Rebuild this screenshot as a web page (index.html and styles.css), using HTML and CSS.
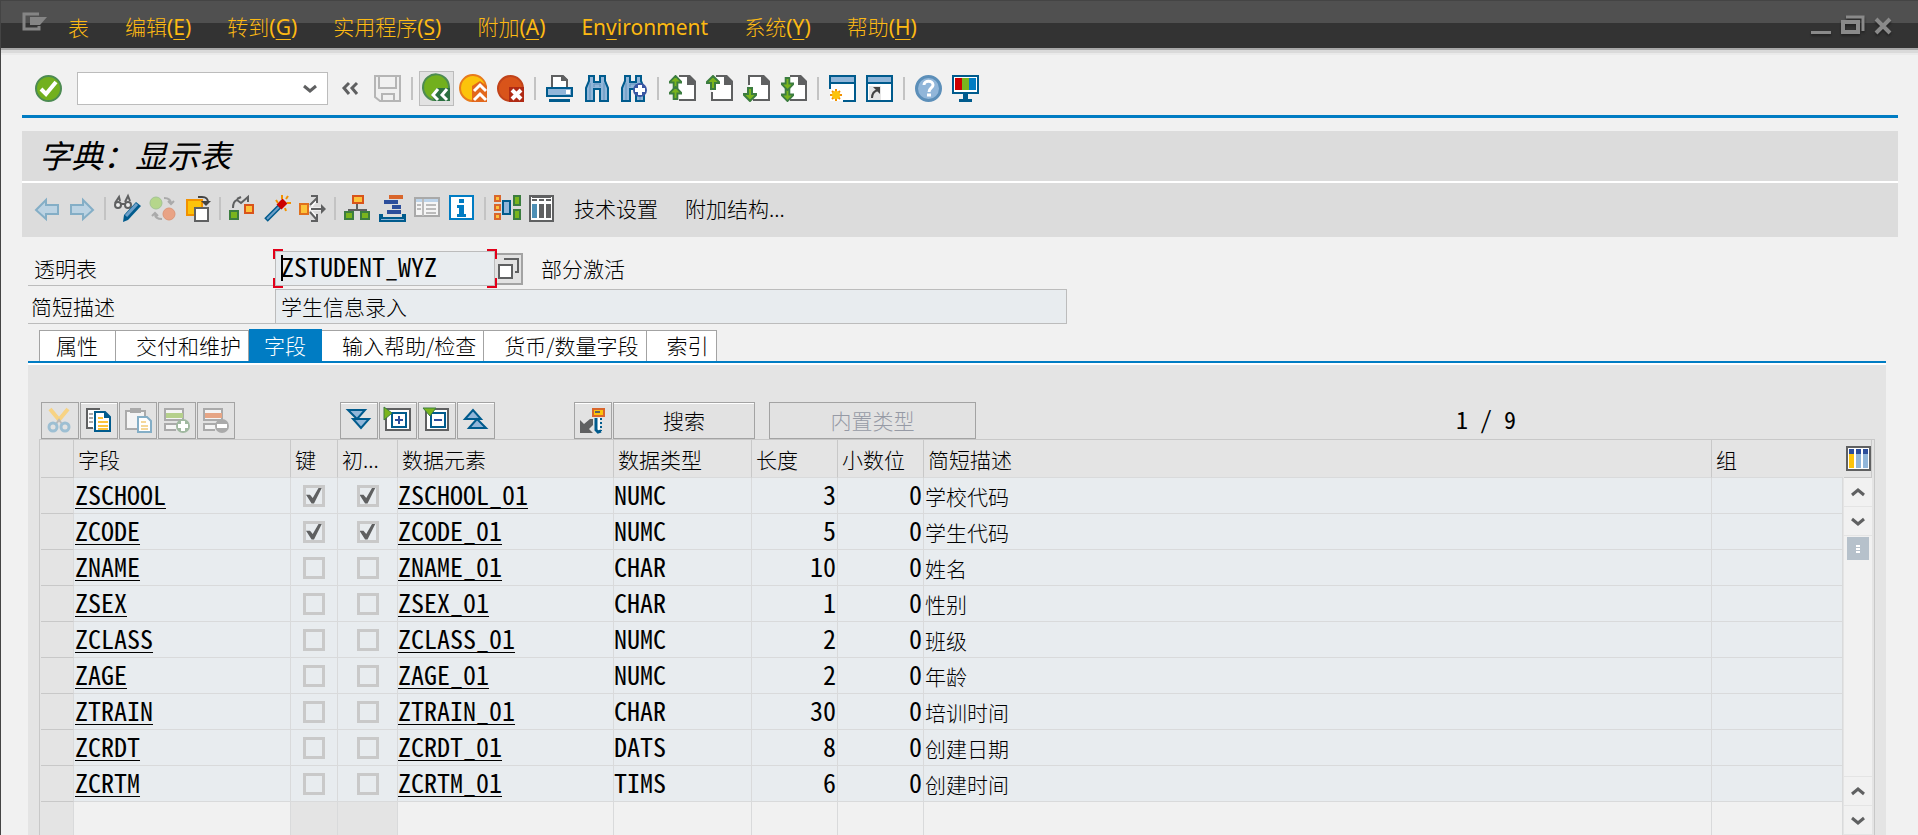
FILE: index.html
```html
<!DOCTYPE html>
<html lang="zh-CN">
<head>
<meta charset="utf-8">
<title>字典：显示表</title>
<link rel="stylesheet" href="styles.css">
</head>
<body>
<svg class="defs" aria-hidden="true">
  <symbol id="page" viewBox="0 0 27 27"><path d="M10 1h9l7 7v17H10z" fill="#fff"/><path d="M10 1h9M10 25h16V8" fill="none" stroke="#5f6061" stroke-width="2"/><path d="M18 0h3l6 6v4h-9z" fill="#5f6061"/></symbol>
  <symbol id="up" viewBox="0 0 14 15"><path d="M7 1l6 6v1H9v6H5V8H1V7z" fill="#7ab51d" stroke="#3c7d3f" stroke-width="2"/></symbol>
  <symbol id="binoc" viewBox="0 0 24 27"><path d="M4 1h5v6h6V1h5v5l3 7v13h-8V14H9v12H1V13l3-7z" fill="#91b6d9" stroke="#005b8d" stroke-width="2"/><path d="M9 12V9h6v3M5 8v17M19 8v17" fill="none" stroke="#6392bd"/></symbol>
  <symbol id="chev-up" viewBox="0 0 14 9"><path d="M1 7l6-5 6 5" fill="none" stroke="#5f6061" stroke-width="3"/></symbol>
  <symbol id="chev-down" viewBox="0 0 14 9"><path d="M1 2l6 5 6-5" fill="none" stroke="#5f6061" stroke-width="3"/></symbol>
</svg>
<div class="window">
  <header class="menubar">
    <button class="sysmenu" aria-label="系统菜单"><svg width="26" height="19" viewBox="0 0 26 19"><path d="M17 2H2v15h15v-3" fill="none" stroke="#858585" stroke-width="3"/><path d="M8 5h17l-7 8H8z" fill="#858585"/></svg></button>
    <nav class="menus">
      <button>表</button>
      <button>编辑<span>(<u>E</u>)</span></button>
      <button>转到<span>(<u>G</u>)</span></button>
      <button>实用程序<span>(<u>S</u>)</span></button>
      <button>附加<span>(<u>A</u>)</span></button>
      <button><span>En<u>v</u>ironment</span></button>
      <button>系统<span>(<u>Y</u>)</span></button>
      <button>帮助<span>(<u>H</u>)</span></button>
    </nav>
    <div class="winctl">
      <button aria-label="最小化"><svg width="20" height="20" viewBox="0 0 20 20"><path d="M0 16h20v3H0z" fill="#8a8a8a"/></svg></button>
      <button aria-label="还原"><svg width="24" height="20" viewBox="0 0 24 20"><path d="M5 2h17v14" fill="none" stroke="#8a8a8a" stroke-width="3"/><path d="M2 7h15v10H2z" fill="none" stroke="#8a8a8a" stroke-width="4"/></svg></button>
      <button aria-label="关闭"><svg width="16" height="20" viewBox="0 0 16 20"><path d="M1 4l14 14M15 4L1 18" stroke="#8a8a8a" stroke-width="4"/></svg></button>
    </div>
  </header>

  <div class="stdbar">
    <button class="ib" aria-label="回车"><svg width="27" height="27" viewBox="0 0 27 27"><circle cx="13.500" cy="13.500" r="12.500" fill="#72b01e" stroke="#4d8b52" stroke-width="2"/><path d="M6 14l5 5L21 7" fill="none" stroke="#fff" stroke-width="4"/></svg></button>
    <div class="command"><input type="text" aria-label="命令"><button aria-label="命令历史"><svg width="14" height="9"><use href="#chev-down"/></svg></button></div>
    <button class="collapse" aria-label="隐藏命令字段"><svg width="16" height="13" viewBox="0 0 16 13"><path d="M7 1L2 6l5 6M15 1l-5 5 5 6" fill="none" stroke="#5f6061" stroke-width="3"/></svg></button>
    <button class="ib" aria-label="保存" disabled><svg width="27" height="27" viewBox="0 0 27 27"><path d="M1 1h25v25H6l-5-4zM5 1v12h17V1M8 26v-7h12v7" fill="#f0f0f0" stroke="#b5b5b5" stroke-width="2"/></svg></button>
    <span class="sep"></span>
    <button class="ib back" aria-label="返回"><svg width="27" height="27" viewBox="0 0 27 27"><path d="M26 12A13 13 0 1 0 10 25h16z" fill="#72b01e" stroke="#4d8b52" stroke-width="2"/><path d="M8 20l6-7h13v13H12z" fill="#2c7040"/><path d="M15 14l-5 6 5 5M24 14l-5 6 5 5" fill="none" stroke="#fff" stroke-width="3"/></svg></button>
    <button class="ib" aria-label="退出"><svg width="27" height="27" viewBox="0 0 27 27"><path d="M26 12A13 13 0 1 0 12 26h14z" fill="#fcc30b" stroke="#e87b1c" stroke-width="2"/><path d="M12 11l8-5 7 5v16H12z" fill="#e2681c"/><path d="M14 16l6-6 6 6M14 25l6-6 6 6" fill="none" stroke="#fff" stroke-width="3"/></svg></button>
    <button class="ib" aria-label="取消"><svg width="27" height="27" viewBox="0 0 27 27"><path d="M26 13A12.500 12.500 0 1 0 13 26h13z" fill="#d9541a" stroke="#c1431a" stroke-width="2"/><path d="M12 12h15v15H12z" fill="#b02a14"/><path d="M15 15l9 9M24 15l-9 9" stroke="#fff" stroke-width="4"/></svg></button>
    <span class="sep"></span>
    <button class="ib" aria-label="打印"><svg width="27" height="27" viewBox="0 0 27 27"><path d="M6 12V1h11l4 4v7" fill="#fff" stroke="#5f6061" stroke-width="2"/><path d="M15 1h3l4 4v5h-2V6h-5z" fill="#5f6061"/><path d="M1 13h25v8H1z" fill="#91b6d9" stroke="#005b8d" stroke-width="2"/><path d="M20 15h4v4h-4z" fill="#fff"/><path d="M3 24h21v3H3z" fill="#005b8d"/></svg></button>
    <button class="ib" aria-label="查找"><svg width="27" height="27" viewBox="0 0 27 27"><use href="#binoc" x="2" width="24" height="27"/></svg></button>
    <button class="ib" aria-label="查找下一个"><svg width="27" height="27" viewBox="0 0 27 27"><use href="#binoc" x="1" width="24" height="27"/><circle cx="20" cy="15" r="7" fill="#3a56a3"/><path d="M20 10v10M15 15h10" stroke="#fff" stroke-width="4"/></svg></button>
    <span class="sep"></span>
    <button class="ib" aria-label="首页"><svg width="27" height="27" viewBox="0 0 27 27"><use href="#page" width="27" height="27"/><use href="#up" width="13" height="14"/><use href="#up" y="11" width="13" height="14"/></svg></button>
    <button class="ib" aria-label="上一页"><svg width="27" height="27" viewBox="0 0 27 27"><path d="M6 14h8v12H6z" fill="#fff"/><use href="#page" width="27" height="27"/><path d="M12 25H6v-8" fill="none" stroke="#5f6061" stroke-width="2"/><use href="#up" width="14" height="15"/></svg></button>
    <button class="ib" aria-label="下一页"><svg width="27" height="27" viewBox="0 0 27 27"><path d="M6 1h8v12H6z" fill="#fff"/><use href="#page" width="27" height="27"/><path d="M12 1H6v9" fill="none" stroke="#5f6061" stroke-width="2"/><g transform="rotate(180 7 19.500)"><use href="#up" y="12" width="14" height="15"/></g></svg></button>
    <button class="ib" aria-label="末页"><svg width="27" height="27" viewBox="0 0 27 27"><use href="#page" width="27" height="27"/><g transform="rotate(180 7 14.500)"><use href="#up" y="2" width="13" height="14"/><use href="#up" y="13" width="13" height="14"/></g></svg></button>
    <span class="sep"></span>
    <button class="ib" aria-label="新建会话"><svg width="27" height="27" viewBox="0 0 27 27"><path d="M1 1h25v25H1z" fill="#fff"/><path d="M1 14V1h25v25H14M1 8h25" fill="none" stroke="#005b8d" stroke-width="2"/><path d="M2 2h23v5H2z" fill="#91b6d9"/><path d="M7 14v12M1 20h12M3 16l8 8M11 16l-8 8" stroke="#f29100" stroke-width="2"/><circle cx="7" cy="20" r="4" fill="#fcc30b"/></svg></button>
    <button class="ib" aria-label="创建快捷方式"><svg width="27" height="27" viewBox="0 0 27 27"><path d="M1 1h25v25H1z" fill="#fff" stroke="#005b8d" stroke-width="2"/><path d="M2 2h23v5H2z" fill="#91b6d9"/><path d="M1 8h25" stroke="#005b8d" stroke-width="2"/><path d="M3 11h12v14H3z" fill="#e6e6e6"/><path d="M6 23c0-4 2-7 6-8" fill="none" stroke="#444" stroke-width="2"/><path d="M7 12h7v7z" fill="#444"/></svg></button>
    <span class="sep"></span>
    <button class="ib" aria-label="帮助"><svg width="27" height="27" viewBox="0 0 27 27"><circle cx="13.500" cy="13.500" r="12" fill="#91b6d9" stroke="#5c8fb9" stroke-width="3"/><path d="M9 10c0-5 9-5 9 0 0 3-4 3-4 7M12 20h4" fill="none" stroke="#fff" stroke-width="3"/></svg></button>
    <button class="ib" aria-label="自定义布局"><svg width="27" height="27" viewBox="0 0 27 27"><path d="M1 1h25v17H1z" fill="#fff" stroke="#005b8d" stroke-width="2"/><path d="M3 3h7v12H3z" fill="#c00"/><path d="M10 3h7v12h-7z" fill="#7ab51d"/><path d="M17 3h7v12h-7z" fill="#007cc3"/><path d="M11 19h5v5h4v3H7v-3h4z" fill="#005b8d"/></svg></button>
  </div>

  <h1 class="title">字典：显示表</h1>

  <div class="appbar">
    <button class="ib" aria-label="上一个对象"><svg width="27" height="27" viewBox="0 0 27 27"><path d="M2 15L12 5v5h12v9H12v5z" fill="#bcd3e3" stroke="#84aec6" stroke-width="2"/></svg></button>
    <button class="ib" aria-label="下一个对象"><svg width="27" height="27" viewBox="0 0 27 27"><path d="M24 15L14 5v5H2v9h12v5z" fill="#bcd3e3" stroke="#84aec6" stroke-width="2"/></svg></button>
    <span class="sep"></span>
    <button class="ib" aria-label="显示/更改"><svg width="27" height="27" viewBox="0 0 27 27"><path d="M1 8l4-6 1 4M11 7l3-6 2 5" fill="none" stroke="#5f6061" stroke-width="2"/><circle cx="4" cy="10" r="3" fill="#eee" stroke="#5f6061" stroke-width="2"/><circle cx="14" cy="10" r="3" fill="#eee" stroke="#5f6061" stroke-width="2"/><path d="M7 9h4" stroke="#5f6061" stroke-width="2"/><path d="M9 27l1-7L22 7l5 4-13 14z" fill="#005b8d"/><path d="M12 21L23 9" stroke="#6d9fc8" stroke-width="3"/></svg></button>
    <button class="ib" aria-label="激活/未激活" disabled><svg width="27" height="27" viewBox="0 0 27 27"><circle cx="7" cy="8" r="6" fill="#b5d68b" stroke="#a3c492"/><circle cx="20" cy="19" r="6" fill="#e9a385" stroke="#dd9678"/><path d="M15 3c5 0 7 2 7 6M19 6l3 3 3-3M13 24c-5 0-7-2-7-5M3 21l3-3 3 3" fill="none" stroke="#aaa" stroke-width="2"/></svg></button>
    <button class="ib" aria-label="其他对象"><svg width="27" height="27" viewBox="0 0 27 27"><path d="M3 5h15v15H3z" fill="#fcc30b" stroke="#f29100" stroke-width="2"/><path d="M11 13h13v13H11z" fill="#fff" stroke="#5f6061" stroke-width="2"/><path d="M14 2h4c5 0 6 2 6 6" fill="none" stroke="#444" stroke-width="2"/><path d="M17 6h10l-5 5z" fill="#444"/></svg></button>
    <span class="sep"></span>
    <button class="ib" aria-label="检查"><svg width="27" height="27" viewBox="0 0 27 27"><path d="M1 16h8v8H1z" fill="#7ab51d" stroke="#3c7d3f" stroke-width="2"/><path d="M16 10h8v8h-8z" fill="#fcc33b" stroke="#d9541a" stroke-width="2"/><path d="M4 13c0-5 1-7 4-8l4 3 7-6v5M8 4l4-2" fill="none" stroke="#5f6061" stroke-width="2"/></svg></button>
    <button class="ib" aria-label="激活"><svg width="27" height="27" viewBox="0 0 27 27"><path d="M2 25L16 11" stroke="#005b8d" stroke-width="5"/><path d="M3 24L15 12" stroke="#6d9fc8" stroke-width="2"/><path d="M15 12l6-6" stroke="#c00" stroke-width="7"/><path d="M12 5l2 3M18 0v4M24 1l-2 3M27 8h-4M22 16l-1-3" stroke="#f29100" stroke-width="2"/></svg></button>
    <button class="ib" aria-label="使用位置清单"><svg width="27" height="27" viewBox="0 0 27 27"><path d="M1 9h8v10H1z" fill="#fcc33b" stroke="#e0701d" stroke-width="2"/><path d="M10 14h14M12 11l6-7M12 17l6 6" stroke="#fff" stroke-width="3"/><path d="M11 10l7-7M18 8V1h-6M11 17l7 8M18 19v7h-6M12 14h13" fill="none" stroke="#5f6061" stroke-width="2"/><path d="M22 9l5 5-5 5z" fill="#5f6061"/></svg></button>
    <span class="sep"></span>
    <button class="ib" aria-label="显示对象列表"><svg width="27" height="27" viewBox="0 0 27 27"><path d="M13 9v5M5 18v-3h17v3" fill="none" stroke="#5f6061" stroke-width="2"/><path d="M9 1h10v7H9z" fill="#fcc33b" stroke="#d9541a" stroke-width="2"/><path d="M1 17h8v7H1zM17 17h8v7h-8z" fill="#7ab51d" stroke="#3c7d3f" stroke-width="2"/></svg></button>
    <button class="ib" aria-label="显示导航窗口"><svg width="27" height="27" viewBox="0 0 27 27"><path d="M10 0h14v4H10z" fill="#d9662b"/><path d="M5 5h14v4H5zM13 10h9v4h-9zM8 15h14v4H8z" fill="#2c4e9b"/><path d="M1 20v6h25v-6h-2v3H3v-3z" fill="#91b6d9" stroke="#005b8d" stroke-width="2"/></svg></button>
    <button class="ib" aria-label="列表" disabled><svg width="27" height="27" viewBox="0 0 27 27"><path d="M1 3h24v18H1z" fill="#f5f5f5" stroke="#a9a9a9" stroke-width="2"/><path d="M2 4h22v3H2z" fill="#bdd4ea"/><path d="M9 4v17M3 10h4M3 14h4M12 10h10M12 14h10M12 18h10" stroke="#bbb" stroke-width="2"/></svg></button>
    <button class="ib" aria-label="信息"><svg width="27" height="27" viewBox="0 0 27 27"><path d="M1 1h23v23H1z" fill="#fff" stroke="#007cc3" stroke-width="2"/><path d="M10 4h5v4h-5zM8 10h7v9h2v3H8v-3h2v-6H8z" fill="#007cc3"/></svg></button>
    <span class="sep"></span>
    <button class="ib" aria-label="图形"><svg width="27" height="27" viewBox="0 0 27 27"><path d="M1 1h5v5H1zM1 10h5v5H1zM1 19h5v5H1z" fill="#fcc33b" stroke="#d9662b" stroke-width="2"/><path d="M9 6h7v13H9z" fill="#91b6d9" stroke="#005b8d" stroke-width="2"/><path d="M20 1h6v9h-6zM20 15h6v9h-6z" fill="#7ab51d" stroke="#3c7d3f" stroke-width="2"/></svg></button>
    <button class="ib" aria-label="内容"><svg width="27" height="27" viewBox="0 0 27 27"><path d="M1 1h23v25H1z" fill="#fff"/><path d="M1 1h23v25H1z" fill="none" stroke="#5f6061" stroke-width="2"/><path d="M3 4h5v2H3zM10 4h5v2h-5zM17 4h5v2h-5zM10 9h5v14h-5zM17 9h5v14h-5zM3 2h19v1H3z" fill="#5f6061"/><path d="M3 9h5v14H3z" fill="#4d8fb5"/></svg></button>
    <button class="textbtn">技术设置</button>
    <button class="textbtn">附加结构...</button>
  </div>

  <div class="form">
    <div class="formrow">
      <label class="lab inset" for="tabname">透明表</label>
      <div class="focusbox">
        <input id="tabname" class="mono" type="text" value="ZSTUDENT_WYZ" readonly>
        <i class="corner tl"></i><i class="corner tr"></i><i class="corner bl"></i><i class="corner br"></i><i class="caret"></i>
      </div>
      <button class="f4" aria-label="搜索帮助"><svg width="21" height="21" viewBox="0 0 21 21"><path d="M6 1h14v13h-3" fill="none" stroke="#5f6061" stroke-width="2"/><path d="M1 7h13v13H1z" fill="#fff" stroke="#5f6061" stroke-width="2"/></svg></button>
      <span class="status">部分激活</span>
    </div>
    <div class="formrow">
      <label class="lab" for="ddtext">简短描述</label>
      <input id="ddtext" class="desc" type="text" value="学生信息录入" readonly>
    </div>
  </div>

  <div class="tabs" role="tablist">
    <button role="tab" class="first">属性</button>
    <button role="tab">交付和维护</button>
    <button role="tab" class="active" aria-selected="true">字段</button>
    <button role="tab">输入帮助/检查</button>
    <button role="tab">货币/数量字段</button>
    <button role="tab">索引</button>
  </div>

  <main class="panel">
    <div class="gridbar">
      <div class="group edit">
        <button class="gb off" aria-label="剪切" disabled><svg width="27" height="27" viewBox="0 0 27 27"><path d="M4 2l10 12M22 2L12 14" stroke="#f7d384" stroke-width="4"/><path d="M10 17l3-4 3 4" fill="none" stroke="#bbb" stroke-width="2"/><circle cx="7" cy="20" r="4" fill="none" stroke="#9dbfd3" stroke-width="3"/><circle cx="19" cy="20" r="4" fill="none" stroke="#9dbfd3" stroke-width="3"/></svg></button>
        <button class="gb" aria-label="复制"><svg width="27" height="27" viewBox="0 0 27 27"><path d="M2 2h13v19H2z" fill="#fff"/><path d="M15 2H2v19h6" fill="none" stroke="#5f6061" stroke-width="2"/><path d="M4 7h4M4 11h4M4 15h4" stroke="#aaa" stroke-width="2"/><path d="M10 5h10l5 5v14H10z" fill="#fff" stroke="#005b8d" stroke-width="2"/><path d="M19 4l7 7h-7z" fill="#005b8d"/><path d="M13 11h5M13 15h10M13 19h10M13 22h10" stroke="#fcc33b" stroke-width="2"/></svg></button>
        <button class="gb off" aria-label="粘贴" disabled><svg width="27" height="27" viewBox="0 0 27 27"><path d="M2 4h19v18H2z" fill="#f4f4f4" stroke="#aaa" stroke-width="2"/><path d="M6 1h11v5H6z" fill="#aaa"/><path d="M14 10h9l4 4v11H14z" fill="#fff" stroke="#84aec6" stroke-width="2"/><path d="M17 15h5M17 19h7M17 22h7" stroke="#f5d799" stroke-width="2"/></svg></button>
        <button class="gb off" aria-label="插入行" disabled><svg width="27" height="27" viewBox="0 0 27 27"><path d="M2 2h18v11H2zM14 17H2v6h11" fill="#f4f4f4" stroke="#aaa" stroke-width="2"/><path d="M3 6h17v5H3z" fill="#b5d08c"/><circle cx="20" cy="19" r="7" fill="#a0b8a0"/><path d="M20 14v10M15 19h10" stroke="#fff" stroke-width="4"/></svg></button>
        <button class="gb off" aria-label="删除行" disabled><svg width="27" height="27" viewBox="0 0 27 27"><path d="M2 2h18v11H2zM14 17H2v6h11" fill="#f4f4f4" stroke="#aaa" stroke-width="2"/><path d="M3 6h17v5H3z" fill="#e6a585"/><circle cx="20" cy="19" r="7" fill="#aaa"/><path d="M15 19h10" stroke="#fff" stroke-width="4"/></svg></button>
      </div>
      <div class="group nav">
        <button class="gb" aria-label="全部展开"><svg width="27" height="27" viewBox="0 0 27 27"><path d="M8 12h16l-8 9z" fill="#91b6d9" stroke="#005b8d" stroke-width="2"/><path d="M3 3h17l-8 9z" fill="#91b6d9" stroke="#005b8d" stroke-width="2"/></svg></button>
        <button class="gb" aria-label="展开包含"><svg width="27" height="27" viewBox="0 0 27 27"><path d="M2 2h24v21H2z" fill="#fff" stroke="#5f6061" stroke-width="2"/><path d="M8 6h14v14H8z" fill="#fff" stroke="#005b8d" stroke-width="2"/><path d="M15 9v8M11 13h8" stroke="#2c4e9b" stroke-width="2"/><path d="M0 0l8 6-8 7z" fill="#7ab51d" stroke="#3c7d3f"/></svg></button>
        <button class="gb" aria-label="折叠包含"><svg width="27" height="27" viewBox="0 0 27 27"><path d="M3 2h22v21H3z" fill="#fff" stroke="#5f6061" stroke-width="2"/><path d="M8 6h14v14H8z" fill="#fff" stroke="#005b8d" stroke-width="2"/><path d="M11 13h8" stroke="#2c4e9b" stroke-width="2"/><path d="M0 1h13L7 9z" fill="#7ab51d" stroke="#3c7d3f"/></svg></button>
        <button class="gb" aria-label="全部折叠"><svg width="27" height="27" viewBox="0 0 27 27"><path d="M3 12l8-9 8 9z" fill="#91b6d9" stroke="#005b8d" stroke-width="2"/><path d="M7 21l8-9 9 9z" fill="#91b6d9" stroke="#005b8d" stroke-width="2"/></svg></button>
      </div>
      <div class="group keys">
        <button class="gb" aria-label="外键"><svg width="27" height="27" viewBox="0 0 27 27"><path d="M1 13v13h13l-4-4 4-4v-6h-3l-6 5z" fill="#5f6061"/><path d="M14 2h11v7H14z" fill="#fcc30b" stroke="#d9662b" stroke-width="2"/><path d="M16 4h5v2h-5z" fill="#5f6061"/><path d="M16 11h5v14h-5z" fill="#fff"/><path d="M17 11v12l2 2 3-1" fill="none" stroke="#005b8d" stroke-width="3"/><path d="M22 11v13" stroke="#005b8d" stroke-width="2" stroke-dasharray="2 2"/></svg></button>
        <button class="gb search">搜索</button>
      </div>
      <button class="gb off builtin" disabled>内置类型</button>
      <output class="counter">1 / 9</output>
    </div>

    <div class="gridwrap">
      <table class="grid">
        <colgroup><col class="c-sel"><col class="c-name"><col class="c-key"><col class="c-init"><col class="c-elem"><col class="c-type"><col class="c-len"><col class="c-dec"><col><col class="c-grp"></colgroup>
        <thead><tr><th></th><th>字段</th><th>键</th><th>初...</th><th>数据元素</th><th>数据类型</th><th>长度</th><th>小数位</th><th>简短描述</th><th>组</th></tr></thead>
        <tbody>
          <tr><td></td><td class="code"><a href="#">ZSCHOOL</a></td><td><input type="checkbox" aria-label="键" checked disabled></td><td><input type="checkbox" aria-label="初始值" checked disabled></td><td class="code"><a href="#">ZSCHOOL_01</a></td><td class="code">NUMC</td><td class="code num">3</td><td class="code num">0</td><td class="cjk">学校代码</td><td></td></tr>
          <tr><td></td><td class="code"><a href="#">ZCODE</a></td><td><input type="checkbox" aria-label="键" checked disabled></td><td><input type="checkbox" aria-label="初始值" checked disabled></td><td class="code"><a href="#">ZCODE_01</a></td><td class="code">NUMC</td><td class="code num">5</td><td class="code num">0</td><td class="cjk">学生代码</td><td></td></tr>
          <tr><td></td><td class="code"><a href="#">ZNAME</a></td><td><input type="checkbox" aria-label="键" disabled></td><td><input type="checkbox" aria-label="初始值" disabled></td><td class="code"><a href="#">ZNAME_01</a></td><td class="code">CHAR</td><td class="code num">10</td><td class="code num">0</td><td class="cjk">姓名</td><td></td></tr>
          <tr><td></td><td class="code"><a href="#">ZSEX</a></td><td><input type="checkbox" aria-label="键" disabled></td><td><input type="checkbox" aria-label="初始值" disabled></td><td class="code"><a href="#">ZSEX_01</a></td><td class="code">CHAR</td><td class="code num">1</td><td class="code num">0</td><td class="cjk">性别</td><td></td></tr>
          <tr><td></td><td class="code"><a href="#">ZCLASS</a></td><td><input type="checkbox" aria-label="键" disabled></td><td><input type="checkbox" aria-label="初始值" disabled></td><td class="code"><a href="#">ZCLASS_01</a></td><td class="code">NUMC</td><td class="code num">2</td><td class="code num">0</td><td class="cjk">班级</td><td></td></tr>
          <tr><td></td><td class="code"><a href="#">ZAGE</a></td><td><input type="checkbox" aria-label="键" disabled></td><td><input type="checkbox" aria-label="初始值" disabled></td><td class="code"><a href="#">ZAGE_01</a></td><td class="code">NUMC</td><td class="code num">2</td><td class="code num">0</td><td class="cjk">年龄</td><td></td></tr>
          <tr><td></td><td class="code"><a href="#">ZTRAIN</a></td><td><input type="checkbox" aria-label="键" disabled></td><td><input type="checkbox" aria-label="初始值" disabled></td><td class="code"><a href="#">ZTRAIN_01</a></td><td class="code">CHAR</td><td class="code num">30</td><td class="code num">0</td><td class="cjk">培训时间</td><td></td></tr>
          <tr><td></td><td class="code"><a href="#">ZCRDT</a></td><td><input type="checkbox" aria-label="键" disabled></td><td><input type="checkbox" aria-label="初始值" disabled></td><td class="code"><a href="#">ZCRDT_01</a></td><td class="code">DATS</td><td class="code num">8</td><td class="code num">0</td><td class="cjk">创建日期</td><td></td></tr>
          <tr><td></td><td class="code"><a href="#">ZCRTM</a></td><td><input type="checkbox" aria-label="键" disabled></td><td><input type="checkbox" aria-label="初始值" disabled></td><td class="code"><a href="#">ZCRTM_01</a></td><td class="code">TIMS</td><td class="code num">6</td><td class="code num">0</td><td class="cjk">创建时间</td><td></td></tr>
          <tr class="empty"><td></td><td></td><td></td><td></td><td></td><td></td><td></td><td></td><td></td><td></td></tr>
        </tbody>
      </table>
      <div class="side">
        <button class="config" aria-label="表设置"><svg width="25" height="25" viewBox="0 0 25 25"><path d="M1 1h23v23H1z" fill="#fff" stroke="#5f6061" stroke-width="2"/><path d="M3 3h5v5H3zM10 3h5v5h-5zM17 3h5v5h-5z" fill="#2c4e9b"/><path d="M3 8h5v14H3z" fill="#fcc30b"/><path d="M10 8h5v14h-5zM17 8h5v14h-5z" fill="#91b6d9"/></svg></button>
        <div class="scroll">
          <button aria-label="向上滚动"><svg width="14" height="9"><use href="#chev-up"/></svg></button>
          <button aria-label="向下滚动"><svg width="14" height="9"><use href="#chev-down"/></svg></button>
          <div class="track"><div class="thumb"><i></i><i></i><i></i></div></div>
          <button aria-label="向上翻页"><svg width="14" height="9"><use href="#chev-up"/></svg></button>
          <button aria-label="向下翻页"><svg width="14" height="9"><use href="#chev-down"/></svg></button>
        </div>
      </div>
    </div>
  </main>
</div>
</body>
</html>
```
FILE: styles.css
```css
* { box-sizing: border-box; }
body {
  margin: 0;
  background: #f1f1f1;
  color: #000;
  font: 300 21px/28px "Noto Sans CJK SC", sans-serif;
}
button, input, output { font: inherit; color: inherit; }
button { border: 0; padding: 0; margin: 0; background: none; white-space: nowrap; }
svg { display: block; overflow: visible; }
.defs { position: absolute; width: 0; height: 0; }

.window {
  display: flex;
  flex-direction: column;
  height: 100vh;
  overflow: hidden;
  border-left: 1px solid #444;
}

/* menu bar */
.menubar {
  flex: none;
  display: flex;
  align-items: center;
  height: 48px;
  padding: 0 27px 0 21px;
  border-top: 1px solid #444;
  background: linear-gradient(#505050 22px, #333 22px);
  box-shadow: 0 2px #a9a9a9, 0 5px #dadada, 0 7px #eaeaea;
}
.sysmenu { margin-bottom: 6px; }
.menus {
  flex: 1;
  display: flex;
  gap: 36px;
  margin-left: 20px;
  padding-top: 4px;
  color: #fcb913;
}
.menus span { font-family: "Noto Sans", sans-serif; font-weight: 400; }
.menus u { text-underline-offset: 4px; text-decoration-thickness: 1px; }
.winctl { display: flex; gap: 10px; }
.winctl svg { filter: drop-shadow(0 2px 1px #222); }

/* toolbars */
.stdbar {
  flex: none;
  display: flex;
  align-items: center;
  gap: 10px;
  height: 70px;
  margin: 0 20px 0 21px;
  padding: 14px 0 0 13px;
  border-bottom: 3px solid #007cc3;
}
.ib { flex: none; width: 27px; height: 27px; }
.sep { flex: none; width: 2px; height: 23px; background: #c3c3c3; }
.command {
  display: flex;
  align-items: center;
  width: 251px;
  height: 33px;
  margin: 0 4px 0 5px;
  border: 1px solid #bcbcbc;
  background: #fff;
}
.command input { flex: 1; min-width: 0; height: 31px; border: 0; background: none; }
.command button { padding: 0 10px; }
.collapse { margin-right: 6px; }
.back {
  width: 35px;
  height: 35px;
  margin: 0 -4px;
  padding: 3px;
  border: 1px solid #bcbcbc;
  background: #e2e2e2;
}
.title {
  flex: none;
  height: 50px;
  margin: 13px 20px 0 21px;
  padding: 0 17px;
  background: #dcdcdc;
  font-size: 32px;
  line-height: 46px;
  font-weight: 400;
  font-style: italic;
}
.appbar {
  flex: none;
  display: flex;
  align-items: center;
  gap: 8px;
  height: 56px;
  margin: 0 20px 0 21px;
  padding: 0 12px 3px;
  border-top: 2px solid #fff;
  background: #dcdcdc;
}
.textbtn { margin: 0 9px 0 10px; padding-bottom: 1px; }

/* header form */
.form { flex: none; display: grid; gap: 3px; margin: 14px 32px 0 27px; }
.formrow { display: flex; height: 35px; }
.lab { width: 247px; padding: 3px; border-bottom: 1px solid #bcbcbc; }
.inset { padding-left: 6px; }
.focusbox { position: relative; width: 220px; }
.focusbox input, .desc {
  width: 100%;
  height: 35px;
  padding: 0 5px 2px;
  border: 1px solid #bcbcbc;
  background: #e8ecef;
}
.desc { max-width: 792px; }
.mono, .grid { font-family: "Noto Sans Mono CJK SC", "Liberation Mono", monospace; }
.focusbox .mono { font-size: 26px; font-weight: 400; padding-bottom: 7px; }
.corner { position: absolute; width: 10px; height: 10px; border: 0 solid #e2001a; }
.tl { left: -2px; top: -2px; border-width: 2px 0 0 2px; }
.tr { right: -2px; top: -2px; border-width: 2px 2px 0 0; }
.bl { left: -2px; bottom: -2px; border-width: 0 0 2px 2px; }
.br { right: -2px; bottom: -2px; border-width: 0 2px 2px 0; }
.caret { position: absolute; left: 6px; top: 4px; width: 2px; height: 26px; background: #000; }
.f4 {
  align-self: center;
  width: 28px;
  height: 32px;
  padding-left: 3px;
  border: 2px solid #a3a3a3;
  border-left: 0;
  background: #e2e2e2;
}
.status { margin-left: 18px; padding-top: 3px; }

/* tabs */
.tabs {
  flex: none;
  display: flex;
  align-items: flex-end;
  height: 35px;
  margin: 4px 32px 0 27px;
  padding-left: 11px;
  border-bottom: 2px solid #007cc3;
}
.tabs button {
  height: 31px;
  padding: 0 7px 2px 20px;
  border: 1px solid #a3a3a3;
  border-width: 1px 1px 0 0;
  background: #fff;
}
.tabs .first { padding: 0 17px 2px 16px; border-left-width: 1px; }
.tabs .active { height: 32px; padding: 0 15px 2px; border-color: #007cc3; background: #007cc3; color: #fff; }

/* panel */
.panel {
  flex: 1;
  min-height: 0;
  display: flex;
  flex-direction: column;
  margin: 0 32px 0 27px;
  padding: 37px 11px 0;
  border-top: 2px solid #fff;
  background: #e4e4e4;
}
.gridbar { flex: none; display: flex; align-items: center; height: 37px; padding-left: 2px; }
.group { display: flex; gap: 1px; }
.nav { margin-left: 105px; }
.keys { margin-left: 79px; }
.gb {
  width: 38px;
  height: 37px;
  padding: 0 4px 1px;
  border: 1px solid #a3a3a3;
  background: #e2e2e2;
  box-shadow: inset 0 1px #fff;
}
.off { box-shadow: none; }
.search { width: 142px; }
.builtin { width: 207px; margin-left: 14px; color: #969aa5; }
.counter {
  margin-left: auto;
  margin-right: 359px;
  padding-bottom: 3px;
  font: 24px/28px "Noto Sans Mono CJK SC", "Liberation Mono", monospace;
}

/* field table */
.gridwrap {
  flex: 1;
  min-height: 0;
  overflow: hidden;
  display: flex;
  border: 1px solid #c8c8c8;
  border-bottom: 0;
  padding: 0 1px;
}
.grid {
  flex: 1;
  width: 100%;
  align-self: flex-start;
  table-layout: fixed;
  border-collapse: separate;
  border-spacing: 0;
  font-size: 26px;
}
.c-sel { width: 33px; }
.c-name { width: 217px; }
.c-key { width: 47px; }
.c-init { width: 60px; }
.c-elem { width: 216px; }
.c-type { width: 138px; }
.c-len, .c-dec { width: 86px; }
.c-grp { width: 131px; }
.grid th {
  height: 38px;
  padding: 1px 4px 0;
  border-right: 1px solid #c8c8c8;
  border-bottom: 1px solid #d9dadb;
  font: 300 21px/28px "Noto Sans CJK SC", sans-serif;
  text-align: left;
  white-space: nowrap;
  overflow: hidden;
}
.grid th:first-child { border-bottom-color: #c8c8c8; }
.grid th:last-child { border-right: 0; }
.grid td {
  height: 36px;
  padding: 0 1px;
  border-right: 1px solid #d9dadb;
  border-bottom: 1px solid #d9dadb;
  background: #e8ecef;
  white-space: nowrap;
}
.grid td:first-child { background: #e4e4e4; border-bottom-color: #c8c8c8; }
.grid .code { padding: 0 0 4px; font-weight: 400; line-height: 30px; }
.grid .code:nth-child(2) { padding-left: 1px; }
.grid .num { padding-right: 1px; text-align: right; }
.grid .cjk { font: 300 21px/28px "Noto Sans CJK SC", sans-serif; }
.grid .empty td { background: #f1f1f1; }
.grid .empty td:first-child, .grid .empty td:nth-child(3), .grid .empty td:nth-child(4) { background: #e4e4e4; }
.grid a { color: inherit; text-underline-offset: 3px; text-decoration-thickness: 1px; text-decoration-skip-ink: none; }
.grid input {
  appearance: none;
  display: block;
  width: 22px;
  height: 22px;
  margin: 0 auto;
  border: 3px solid #c9c9c9;
  background: #e8ecef;
}
.grid input:checked::before {
  content: "";
  display: block;
  width: 16px;
  height: 16px;
  background: #5f6061;
  clip-path: polygon(0 45%, 25% 45%, 42% 65%, 80% 0, 100% 0, 50% 100%, 35% 100%);
}

/* scroll column */
.side { flex: none; display: flex; flex-direction: column; width: 30px; padding: 0 1px; }
.config { height: 38px; padding-left: 2px; border-right: 1px solid #c8c8c8; border-bottom: 1px solid #c8c8c8; }
.scroll { flex: 1; display: flex; flex-direction: column; background: #f1f1f1; }
.scroll button { flex: none; display: grid; place-items: center; height: 29px; border-bottom: 1px solid #e4e4e4; }
.track { flex: 1; padding: 1px 3px; border-bottom: 1px solid #e4e4e4; }
.thumb { display: flex; flex-direction: column; align-items: center; justify-content: center; gap: 1px; height: 23px; background: #b6c1cb; }
.thumb i { width: 4px; height: 2px; background: #fff; }
```
